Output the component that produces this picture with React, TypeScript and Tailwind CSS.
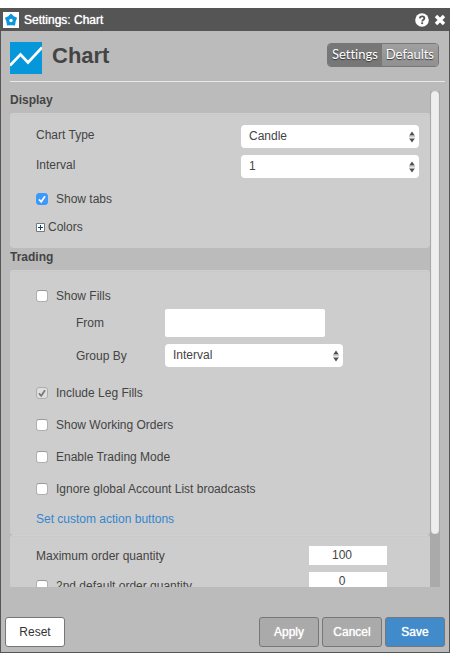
import { useRef, useState } from "react";
import type { ReactNode } from "react";

function Select({ id, options, className = "" }: { id: string; options: string[]; className?: string }) {
  return (
    <div className={`relative h-[23px] w-[178px] ${className}`}>
      <select id={id} className="block h-full w-full appearance-none rounded-[4px] bg-white pb-px pl-2 pr-5 text-xs text-[#444] outline-none">
        {options.map((o) => (
          <option key={o}>{o}</option>
        ))}
      </select>
      <svg className="pointer-events-none absolute right-1 top-1.5 h-3 w-[6px]" viewBox="0 0 6 12" aria-hidden="true">
        <path d="M3 0.4 5.8 4.6H0.2Z M0.2 7.4H5.8L3 11.6Z" fill="#505050" />
        <path d="M0 5.5h6M0 7h6" stroke="#ababab" strokeWidth="0.6" />
      </svg>
    </div>
  );
}

function Check({ label, checked, disabled, className = "" }: { label: string; checked?: boolean; disabled?: boolean; className?: string }) {
  return (
    <label className={`flex h-5 w-fit items-center gap-2 ${className}`}>
      <span className="relative size-3 shrink-0">
        <input
          type="checkbox"
          defaultChecked={checked}
          disabled={disabled}
          className="peer block size-3 appearance-none rounded-[3px] border border-[#b0b0b0] border-t-[#999] bg-white checked:border-[#3b99fc] checked:bg-[#3b99fc] disabled:border-[#adadad] disabled:bg-[#dedede]"
        />
        <svg viewBox="0 0 12 12" aria-hidden="true" className="pointer-events-none absolute inset-0 hidden text-white peer-checked:block peer-disabled:text-[#777]">
          <path d="M3 6.4 5.2 8.8 9 3.2" fill="none" stroke="currentColor" strokeWidth="1.7" />
        </svg>
      </span>
      {label}
    </label>
  );
}

function Panel({ className = "", children }: { className?: string; children: ReactNode }) {
  return (
    <div className={`rounded-[4px] bg-[#cdcdcd] pl-[26px] pr-[11px] shadow-[inset_0_1px_0_#d0d0d0,inset_0_2px_0_#c9c9c9] ${className}`}>
      {children}
    </div>
  );
}

function Heading({ children }: { children: ReactNode }) {
  return <h2 className="mb-1 text-xs font-bold leading-[18px] text-[#444]">{children}</h2>;
}

const action = "h-[30px] w-[60px] rounded-[3px] border border-[#777] text-xs";

export default function App() {
  const [tab, setTab] = useState("Settings");
  const scroller = useRef<HTMLDivElement>(null);
  const [offset, setOffset] = useState(0);

  const onScroll = () => {
    const el = scroller.current;
    if (el) setOffset((el.scrollTop / el.scrollHeight) * el.clientHeight);
  };

  return (
    <div className="bg-white py-2 font-['Liberation_Sans',Arial,sans-serif] text-xs text-[#444]">
      <div className="border border-t-0 border-[#555] bg-[#bbb]">
        <div className="flex h-[23px] items-center bg-[#555] pl-0.5 pr-[3px] text-white">
          <svg className="size-4" viewBox="0 0 16 16" aria-hidden="true">
            <path d="M0 0h16v16H0z" fill="#fff" />
            <path d="M8 2.5 10 4.6 13.200 6.200 12 9 11.300 12.800 8 12.300 4.700 12.800 4 9 2.800 6.200 6 4.600Z" fill="#0c97dc" stroke="#0c97dc" strokeWidth="1.500" strokeLinejoin="round" />
            <circle cx="8" cy="8.500" r="1.700" fill="#fff" />
          </svg>
          <span className="ml-[5px] [text-shadow:0_0_1px_#fff]">Settings: Chart</span>
          <button aria-label="Help" className="ml-auto">
            <svg className="size-3.5" viewBox="0 0 14 14" aria-hidden="true">
              <circle cx="7" cy="7" r="6.8" fill="#fff" />
              <path d="M4.8 5.3C5 3.8 6 3.3 7.1 3.3c1.300 0 2.300.7 2.300 1.900C9.400 6.700 7.200 6.700 7.200 8.500" fill="none" stroke="#555" strokeWidth="1.800" />
              <path d="M6.200 9.300h1.900v1.800H6.200z" fill="#555" />
            </svg>
          </button>
          <button aria-label="Close" className="ml-[5px]">
            <svg className="size-3" viewBox="0 0 12 12" aria-hidden="true">
              <path d="M2 2 10 10M10 2 2 10" stroke="#fff" strokeWidth="3.400" />
            </svg>
          </button>
        </div>

        <div className="ml-[9px] mr-1 flex h-[51px] items-start border-b border-[#e8e8e8] pt-[11px]">
          <svg className="size-8" viewBox="0 0 32 32" aria-hidden="true">
            <path d="M0 0h32v32H0z" fill="#0597da" />
            <path d="M0 23.500 10.500 12.500 18 20.500 32 5.500" fill="none" stroke="#fff" strokeWidth="2.600" />
          </svg>
          <h1 className="ml-2.5 text-[22px] font-bold leading-7">Chart</h1>
          <div className="ml-auto mr-1.5 mt-px flex h-6 overflow-hidden rounded-[4px] border border-[#777] font-[Lato,sans-serif] text-[13px] text-white [font-variant-ligatures:none]">
            {["Settings", "Defaults"].map((name) => (
              <button
                key={name}
                aria-pressed={tab === name}
                onClick={() => setTab(name)}
                className={`flex-1 px-1 [text-shadow:0_1px_1px_#333] ${tab === name ? "bg-[#777]" : "bg-linear-to-b from-[#a0a0a0] to-[#909090]"}`}
              >
                {name}
              </button>
            ))}
          </div>
        </div>

        <div className="ml-[9px] mr-[9px] mt-[9px] flex max-h-[496px]">
          <div ref={scroller} onScroll={onScroll} className="min-w-0 flex-1 overflow-y-auto [scrollbar-width:none]">
            <Heading>Display</Heading>
            <Panel className="pb-[11px] pt-3">
              <div className="flex justify-between">
                <label htmlFor="chart-type" className="leading-5">Chart Type</label>
                <Select id="chart-type" options={["Candle", "Bar", "Line"]} />
              </div>
              <div className="mt-[7px] flex justify-between">
                <label htmlFor="interval" className="leading-5">Interval</label>
                <Select id="interval" options={["1", "5", "15"]} />
              </div>
              <Check label="Show tabs" checked className="mt-[11px]" />
              <button className="mt-2 flex h-5 items-center gap-[3px]">
                <svg className="size-[9px]" viewBox="0 0 9 9" aria-hidden="true">
                  <path d="M.5.5h8v8h-8z" fill="#fff" stroke="#777" />
                  <path d="M2 4.500h5M4.500 2v5" stroke="#00457c" />
                </svg>
                Colors
              </button>
            </Panel>

            <Heading>Trading</Heading>
            <Panel className="pb-1.5 pt-4">
              <Check label="Show Fills" />
              <div className="ml-10 mt-[3px] flex items-center">
                <label htmlFor="from" className="w-[89px]">From</label>
                <input id="from" type="text" className="h-7 w-40 rounded-[2px] bg-white px-2 outline-none" />
              </div>
              <div className="ml-10 mt-[7px] flex items-center">
                <label htmlFor="group-by" className="w-[89px]">Group By</label>
                <Select id="group-by" options={["Interval", "Order"]} />
              </div>
              <div className="mt-4 flex flex-col gap-3">
                <Check label="Include Leg Fills" checked disabled />
                <Check label="Show Working Orders" />
                <Check label="Enable Trading Mode" />
                <Check label="Ignore global Account List broadcasts" />
              </div>
              <a href="#actions" className="mt-2.5 block w-fit leading-5 text-[#3386cf]">Set custom action buttons</a>
            </Panel>

            <Panel className="pb-4 pt-[11px]">
              <div className="mr-8 flex items-center justify-between">
                <label htmlFor="max-qty">Maximum order quantity</label>
                <input id="max-qty" type="text" defaultValue="100" className="h-[19px] w-[78px] bg-white pb-0.5 pr-3 text-center outline-none" />
              </div>
              <div className="mr-8 mt-[7px] flex justify-between">
                <Check label="2nd default order quantity" className="mt-1" />
                <input type="text" aria-label="2nd default quantity" defaultValue="0" className="h-[19px] w-[78px] bg-white pb-0.5 pr-3 text-center outline-none" />
              </div>
            </Panel>
          </div>
          <div className="w-2.5 bg-[#aaa] px-px">
            <div
              className="h-[443px] rounded-full bg-[#eee] shadow-[inset_0_0_1px_#bbb]"
              style={{ marginTop: offset }}
            />
          </div>
        </div>

        <div className="mt-[30px] flex gap-[3px] pb-[5px] pl-1 pr-1">
          <button className={`${action} mr-auto bg-white text-[#333]`}>Reset</button>
          <button className={`${action} bg-[#aaa] text-white [text-shadow:0_0_1px_#fff]`}>Apply</button>
          <button className={`${action} bg-[#aaa] text-white [text-shadow:0_0_1px_#fff]`}>Cancel</button>
          <button className={`${action} bg-[#428bca] text-white [text-shadow:0_0_1px_#fff]`}>Save</button>
        </div>
      </div>
    </div>
  );
}
